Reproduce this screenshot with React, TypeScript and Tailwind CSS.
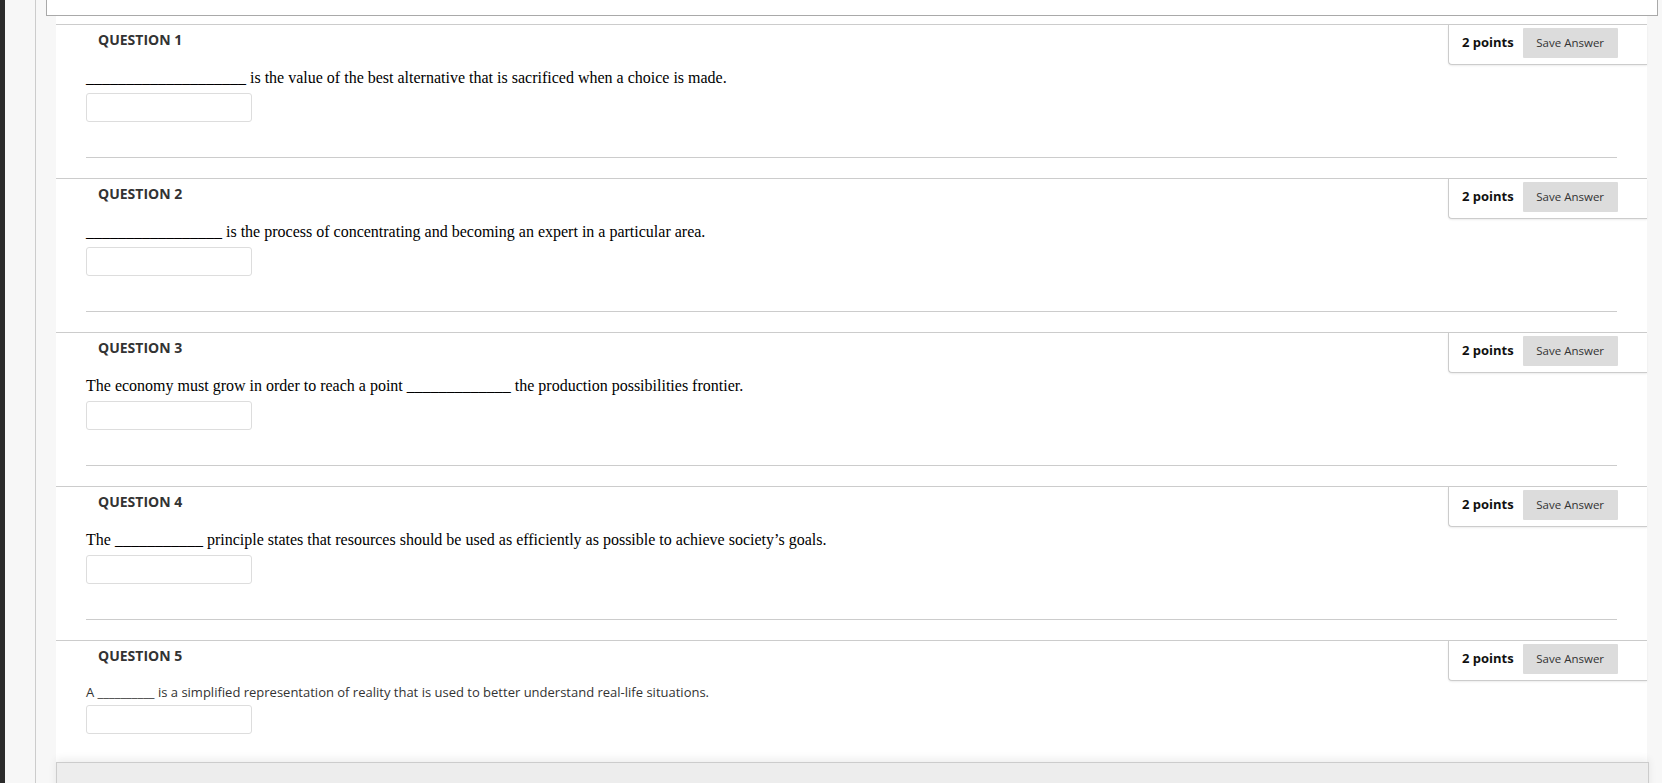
import React from "react";

type Question = {
  num: number;
  before: string;
  blank: string;
  after: string;
  sans?: boolean;
};

const questions: Question[] = [
  {
    num: 1,
    before: "",
    blank: "____________________",
    after: " is the value of the best alternative that is sacrificed when a choice is made.",
  },
  {
    num: 2,
    before: "",
    blank: "_________________",
    after: " is the process of concentrating and becoming an expert in a particular area.",
  },
  {
    num: 3,
    before: "The economy must grow in order to reach a point ",
    blank: "_____________",
    after: " the production possibilities frontier.",
  },
  {
    num: 4,
    before: "The ",
    blank: "___________",
    after: " principle states that resources should be used as efficiently as possible to achieve society\u2019s goals.",
  },
  {
    num: 5,
    before: "A ",
    blank: "__________",
    after: " is a simplified representation of reality that is used to better understand real-life situations.",
    sans: true,
  },
];

const sans = "font-['Open_Sans','Liberation_Sans',sans-serif]";

const QuestionBlock = ({ q, last }: { q: Question; last: boolean }) => {
  return (
    <div className="border-t border-[#cccccc]">
      <div className="flex justify-between items-start">
        <h3 className={`${sans} pl-[42px] pt-[5px] text-[14px] leading-[20px] font-bold text-[#333333]`}>
          QUESTION {q.num}
        </h3>
        <div className="flex items-start h-[40px] w-[199px] pl-[13px] pt-[3px] border-l border-b border-[#cccccc] rounded-bl-[4px] shadow-[0_1px_2px_rgba(0,0,0,0.08)] bg-white">
          <span className={`${sans} text-[13px] leading-[29px] font-bold text-[#111111]`}>2 points</span>
          <button className={`${sans} ml-[9px] w-[95px] h-[30px] bg-[#dcdcdc] text-[11.5px] text-[#333333] rounded-[1px]`}>
            Save Answer
          </button>
        </div>
      </div>
      <div className={`mx-[30px] pt-[4px] ${last ? "pb-[28px]" : "pb-[35px] border-b border-[#cccccc] mb-[20px]"}`}>
        {q.sans ? (
          <p className={`${sans} text-[13px] leading-[14px] text-[#333333]`}>
            {q.before}
            {q.blank}
            {q.after}
          </p>
        ) : (
          <p className="font-['Liberation_Serif','Times_New_Roman',serif] text-[16px] leading-[18px] text-black">
            {q.before}
            {q.blank}
            {q.after}
          </p>
        )}
        <input
          type="text"
          className="block mt-[6px] w-[166px] h-[29px] border border-[#dddddd] rounded-[3px] bg-white outline-none"
        />
      </div>
    </div>
  );
};

const App = () => {
  return (
    <div className="flex h-[783px] overflow-hidden bg-[#f7f7f7]">
      <div className="w-[5px] bg-[#2b2b2b]" />
      <div className="w-[30px]" />
      <div className="flex-1 flex flex-col border-l border-[#cccccc]">
        <div className="ml-[10px] mr-[4px] h-[16px] shrink-0 bg-white border-x border-b border-[#a9a9a9]" />
        <div className="ml-[20px] mr-[15px] flex-1 flex flex-col bg-white pt-[8px]">
          {questions.map((q, i) => (
            <QuestionBlock key={q.num} q={q} last={i === questions.length - 1} />
          ))}
          <div className="-mr-[2px] h-[60px] shrink-0 bg-[#ededed] border border-[#cccccc] shadow-[0_-3px_8px_rgba(0,0,0,0.07)]" />
        </div>
      </div>
    </div>
  );
};

export default App;
